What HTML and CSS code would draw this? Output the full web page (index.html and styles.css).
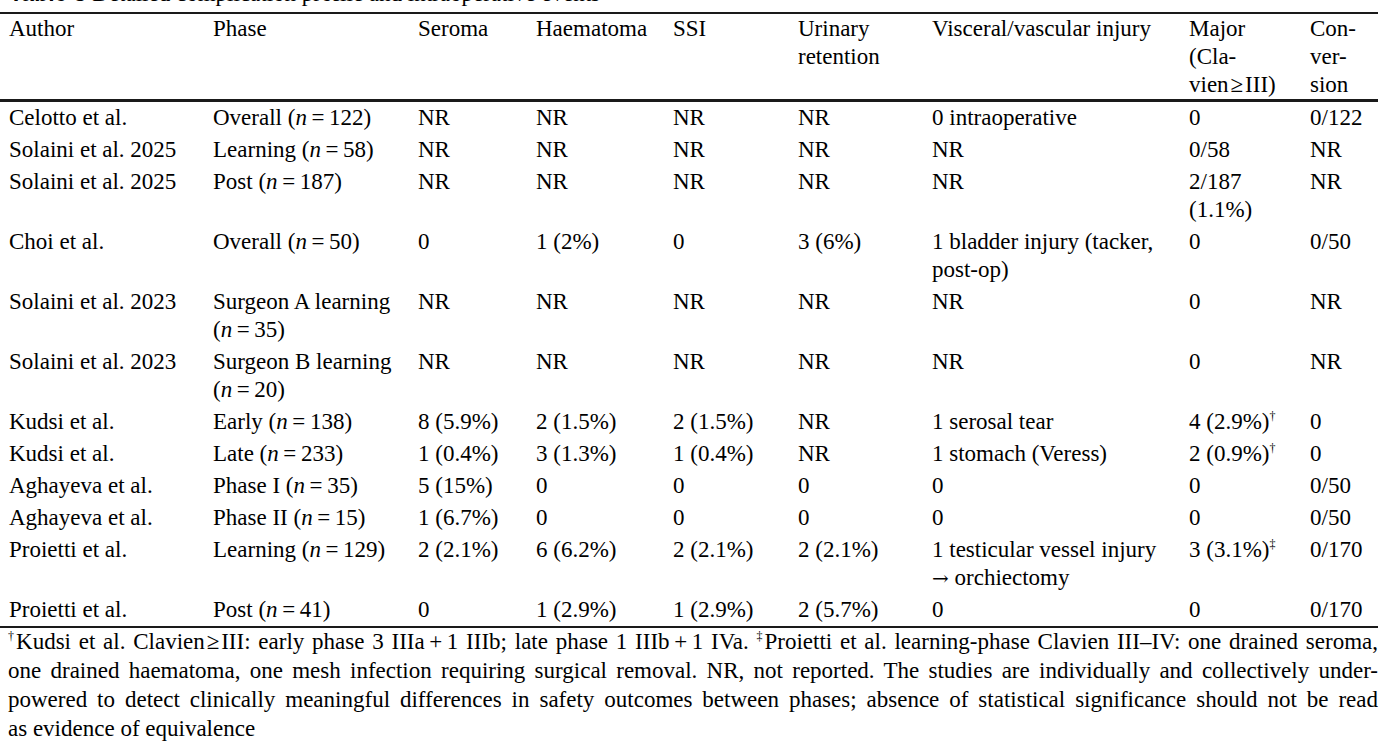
FILE: index.html
```html
<!DOCTYPE html>
<html lang="en">
<head>
  <meta charset="UTF-8" />
  <meta name="viewport" content="width=device-width, initial-scale=1.0"/>
  <title>Table 5 - Detailed complication profile</title>
  <link rel="stylesheet" href="styles.css">
</head>
<body>
  <div class="sheet">
    <p class="caption"><span class="caption-label">Table 5</span> Detailed complication profile and intraoperative events</p>

    <table class="results">
      <colgroup>
        <col class="c-author">
        <col class="c-phase">
        <col class="c-seroma">
        <col class="c-haem">
        <col class="c-ssi">
        <col class="c-urinary">
        <col class="c-injury">
        <col class="c-major">
        <col class="c-conv">
      </colgroup>
      <thead>
        <tr>
          <th>Author</th>
          <th>Phase</th>
          <th>Seroma</th>
          <th>Haematoma</th>
          <th>SSI</th>
          <th>Urinary<br>retention</th>
          <th>Visceral/vascular injury</th>
          <th>Major<br>(Cla-<br>vien&#8202;≥&#8202;III)</th>
          <th>Con-<br>ver-<br>sion</th>
        </tr>
      </thead>
      <tbody>
        <tr>
          <td>Celotto et al.</td>
          <td>Overall (<i>n</i>&thinsp;=&thinsp;122)</td>
          <td>NR</td><td>NR</td><td>NR</td><td>NR</td>
          <td>0 intraoperative</td>
          <td>0</td>
          <td>0/122</td>
        </tr>
        <tr>
          <td>Solaini et al. 2025</td>
          <td>Learning (<i>n</i>&thinsp;=&thinsp;58)</td>
          <td>NR</td><td>NR</td><td>NR</td><td>NR</td>
          <td>NR</td>
          <td>0/58</td>
          <td>NR</td>
        </tr>
        <tr>
          <td>Solaini et al. 2025</td>
          <td>Post (<i>n</i>&thinsp;=&thinsp;187)</td>
          <td>NR</td><td>NR</td><td>NR</td><td>NR</td>
          <td>NR</td>
          <td>2/187<br>(1.1%)</td>
          <td>NR</td>
        </tr>
        <tr>
          <td>Choi et al.</td>
          <td>Overall (<i>n</i>&thinsp;=&thinsp;50)</td>
          <td>0</td>
          <td>1 (2%)</td>
          <td>0</td>
          <td>3 (6%)</td>
          <td>1 bladder injury (tacker,<br>post-op)</td>
          <td>0</td>
          <td>0/50</td>
        </tr>
        <tr>
          <td>Solaini et al. 2023</td>
          <td>Surgeon A learning<br>(<i>n</i>&thinsp;=&thinsp;35)</td>
          <td>NR</td><td>NR</td><td>NR</td><td>NR</td>
          <td>NR</td>
          <td>0</td>
          <td>NR</td>
        </tr>
        <tr>
          <td>Solaini et al. 2023</td>
          <td>Surgeon B learning<br>(<i>n</i>&thinsp;=&thinsp;20)</td>
          <td>NR</td><td>NR</td><td>NR</td><td>NR</td>
          <td>NR</td>
          <td>0</td>
          <td>NR</td>
        </tr>
        <tr>
          <td>Kudsi et al.</td>
          <td>Early (<i>n</i>&thinsp;=&thinsp;138)</td>
          <td>8 (5.9%)</td>
          <td>2 (1.5%)</td>
          <td>2 (1.5%)</td>
          <td>NR</td>
          <td>1 serosal tear</td>
          <td>4 (2.9%)<sup>†</sup></td>
          <td>0</td>
        </tr>
        <tr>
          <td>Kudsi et al.</td>
          <td>Late (<i>n</i>&thinsp;=&thinsp;233)</td>
          <td>1 (0.4%)</td>
          <td>3 (1.3%)</td>
          <td>1 (0.4%)</td>
          <td>NR</td>
          <td>1 stomach (Veress)</td>
          <td>2 (0.9%)<sup>†</sup></td>
          <td>0</td>
        </tr>
        <tr>
          <td>Aghayeva et al.</td>
          <td>Phase I (<i>n</i>&thinsp;=&thinsp;35)</td>
          <td>5 (15%)</td>
          <td>0</td><td>0</td><td>0</td><td>0</td><td>0</td>
          <td>0/50</td>
        </tr>
        <tr>
          <td>Aghayeva et al.</td>
          <td>Phase II (<i>n</i>&thinsp;=&thinsp;15)</td>
          <td>1 (6.7%)</td>
          <td>0</td><td>0</td><td>0</td><td>0</td><td>0</td>
          <td>0/50</td>
        </tr>
        <tr>
          <td>Proietti et al.</td>
          <td>Learning (<i>n</i>&thinsp;=&thinsp;129)</td>
          <td>2 (2.1%)</td>
          <td>6 (6.2%)</td>
          <td>2 (2.1%)</td>
          <td>2 (2.1%)</td>
          <td>1 testicular vessel injury<br><span class="arrow">→</span> orchiectomy</td>
          <td>3 (3.1%)<sup>‡</sup></td>
          <td>0/170</td>
        </tr>
        <tr>
          <td>Proietti et al.</td>
          <td>Post (<i>n</i>&thinsp;=&thinsp;41)</td>
          <td>0</td>
          <td>1 (2.9%)</td>
          <td>1 (2.9%)</td>
          <td>2 (5.7%)</td>
          <td>0</td>
          <td>0</td>
          <td>0/170</td>
        </tr>
      </tbody>
    </table>

    <div class="footnote">
      <span class="line"><sup>†</sup>Kudsi et al. Clavien&#8202;≥&#8202;III: early phase 3 IIIa&thinsp;+&thinsp;1 IIIb; late phase 1 IIIb&thinsp;+&thinsp;1 IVa. <sup>‡</sup>Proietti et al. learning-phase Clavien III–IV: one drained seroma,</span>
      <span class="line">one drained haematoma, one mesh infection requiring surgical removal. NR, not reported. The studies are individually and collectively under-</span>
      <span class="line">powered to detect clinically meaningful differences in safety outcomes between phases; absence of statistical significance should not be read</span>
      <span class="line last">as evidence of equivalence</span>
    </div>
  </div>
</body>
</html>
```

FILE: styles.css
```css
:root {
  --ink: #000000;
  --rule: #1a1a1a;
  --paper: #ffffff;
}
body {
  margin: 0;
  background: var(--paper);
  color: var(--ink);
  font-family: 'Liberation Serif', 'Times New Roman', serif;
  font-size: 23px;
  overflow: hidden;
}
.sheet {
  width: 1378px;
}
.caption {
  margin: -21px 0 4px 9px;
  line-height: 28px;
}
.caption-label {
  font-family: 'Liberation Sans', Arial, sans-serif;
  font-weight: bold;
}
.results {
  width: 1378px;
  table-layout: fixed;
  border-collapse: collapse;
  border-top: 2px solid var(--rule);
  border-bottom: 2px solid var(--rule);
}
.c-author { width: 204px; }
.c-phase { width: 205px; }
.c-seroma { width: 118px; }
.c-haem { width: 137px; }
.c-ssi { width: 125px; }
.c-urinary { width: 134px; }
.c-injury { width: 257px; }
.c-major { width: 121px; }
.c-conv { width: 77px; }
.results th,
.results td {
  padding: 2px 0 2px 9px;
  text-align: left;
  vertical-align: top;
  line-height: 28px;
  white-space: nowrap;
}
.results th {
  font-weight: normal;
  padding-top: 1px;
  padding-bottom: 0;
  border-bottom: 3px solid var(--rule);
}
.results sup,
.footnote sup {
  font-size: 12px;
  line-height: 0;
  vertical-align: 9px;
}
.arrow {
  font-family: 'DejaVu Serif', serif;
  font-size: 20px;
}
.footnote {
  margin-top: -1px;
  padding: 0 0 0 8px;
  line-height: 29px;
}
.footnote .line {
  display: block;
  text-align: justify;
  text-align-last: justify;
  white-space: nowrap;
}
.footnote .line.last {
  text-align-last: left;
}
```
